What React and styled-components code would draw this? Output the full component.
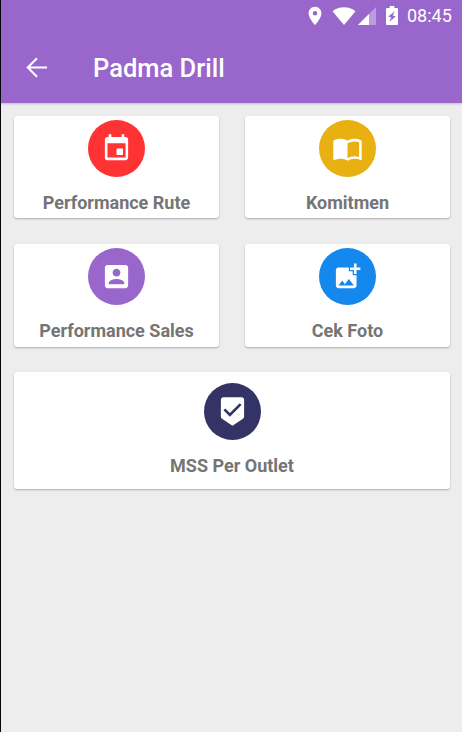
import React from 'react';
import styled, { createGlobalStyle } from 'styled-components';
import {
  MdAddPhotoAlternate,
  MdBeenhere,
  MdEvent,
  MdImportContacts,
  MdLocationOn
} from 'react-icons/md';

const GlobalStyle = createGlobalStyle`
  * {
    box-sizing: border-box;
  }
  body {
    margin: 0;
    background: #ffffff;
    font-family: Roboto, 'Liberation Sans', sans-serif;
  }
`;

const Screen = styled.div`
  width: 462px;
  height: 732px;
  border-left: 1px solid #08060c;
  background: #ededed;
  overflow: hidden;
`;

const Header = styled.header`
  height: 103px;
  background: #9966cc;
  color: #ffffff;
  box-shadow: 0 1px 2px rgba(0, 0, 0, 0.2);
`;

const StatusBar = styled.div`
  display: flex;
  justify-content: flex-end;
  align-items: center;
  height: 32px;
  padding: 0 9px 1px 0;

  svg {
    display: block;
    flex: none;
  }
  .location {
    margin-right: 6px;
  }
  .signal {
    margin: 0 10px 0 2px;
  }
`;

const Clock = styled.span`
  width: 46px;
  margin-left: 9px;
  font-size: 18px;
  line-height: 32px;
  white-space: nowrap;
`;

const Toolbar = styled.div`
  display: flex;
  align-items: center;
  height: 71px;
  padding-left: 25px;
`;

const Title = styled.h1`
  margin: 0 0 0 45px;
  font-weight: 500;
  font-size: 25.5px;
  line-height: 34px;
`;

const Menu = styled.main`
  display: grid;
  grid-template-columns: 205px 205px;
  grid-template-rows: 102px 103px 116px;
  column-gap: 26px;
  row-gap: 26px;
  padding: 13px;

  > :last-child {
    margin-top: -1px;
  }
`;

const Card = styled.div`
  grid-column: ${({ $wide }) => ($wide ? '1 / -1' : 'auto')};
  display: flex;
  flex-direction: column;
  align-items: center;
  padding-top: ${({ $wide }) => ($wide ? 11 : 4)}px;
  background: #ffffff;
  border-radius: 3px;
  box-shadow: 0 1px 2px rgba(0, 0, 0, 0.28);
`;

const IconCircle = styled.div`
  display: flex;
  justify-content: center;
  align-items: center;
  width: 57px;
  height: 57px;
  border-radius: 50%;
  background: ${({ $color }) => $color};
  color: #ffffff;
`;

const Label = styled.p`
  margin: 14px 0 0;
  color: #757575;
  font-weight: 700;
  font-size: 18px;
  line-height: 24px;
`;

function ArrowIcon() {
  return (
    <svg width="22" height="22" viewBox="0 0 22 22" fill="none" stroke="#ffffff" strokeWidth="2">
      <path d="M21 10.5H2.2M11 1.2l-9.3 9.3 9.3 9.3" />
    </svg>
  );
}

function WifiIcon() {
  return (
    <svg width="24" height="18" viewBox="0 0 24 18" fill="#ffffff">
      <path d="M0.5 4.2C3.7 1.8 7.6 0.3 12 0.3s8.3 1.5 11.5 3.9L12 18z" />
    </svg>
  );
}

function SignalIcon() {
  return (
    <svg className="signal" width="18" height="18" viewBox="0 0 18 18" fill="#ffffff">
      <path d="M0 18L18 0v18z" opacity="0.35" />
      <path d="M0 18L11 7v11z" />
    </svg>
  );
}

function BatteryIcon() {
  return (
    <svg width="12" height="19" viewBox="0 0 12 19" fill="#ffffff" fillRule="evenodd">
      <path d="M3.7 0h4.6v2H11a1 1 0 0 1 1 1v15a1 1 0 0 1-1 1H1a1 1 0 0 1-1-1V3a1 1 0 0 1 1-1h2.700zM8.800 5.200L2.300 10.500l3 .9-2 4.600 6.400-5.600-3-.9z" />
    </svg>
  );
}

function AccountBoxIcon({ size }) {
  return (
    <svg width={size} height={size} viewBox="0 0 24 24" fill="currentColor">
      <path d="M3 5v14c0 1.100.89 2 2 2h14c1.100 0 2-.9 2-2V5c0-1.100-.9-2-2-2H5c-1.110 0-2 .9-2 2zm12 4c0 1.660-1.340 3-3 3s-3-1.340-3-3 1.340-3 3-3 3 1.340 3 3zm-9 8c0-2 4-3.100 6-3.100s6 1.100 6 3.100v1H6v-1z" />
    </svg>
  );
}

const items = [
  { title: 'Performance Rute', color: '#ff3333', Icon: MdEvent },
  { title: 'Komitmen', color: '#e8b010', Icon: MdImportContacts },
  { title: 'Performance Sales', color: '#9966cc', Icon: AccountBoxIcon },
  { title: 'Cek Foto', color: '#1488ec', Icon: MdAddPhotoAlternate },
  { title: 'MSS Per Outlet', color: '#333366', Icon: MdBeenhere, wide: true }
];

export default function App() {
  return (
    <>
      <GlobalStyle />
      <Screen>
        <Header>
          <StatusBar>
            <MdLocationOn className="location" size={22} />
            <WifiIcon />
            <SignalIcon />
            <BatteryIcon />
            <Clock>08:45</Clock>
          </StatusBar>
          <Toolbar>
            <ArrowIcon />
            <Title>Padma Drill</Title>
          </Toolbar>
        </Header>
        <Menu>
          {items.map(({ title, color, Icon, wide }) => (
            <Card key={title} $wide={wide}>
              <IconCircle $color={color}>
                <Icon size={31} />
              </IconCircle>
              <Label>{title}</Label>
            </Card>
          ))}
        </Menu>
      </Screen>
    </>
  );
}
